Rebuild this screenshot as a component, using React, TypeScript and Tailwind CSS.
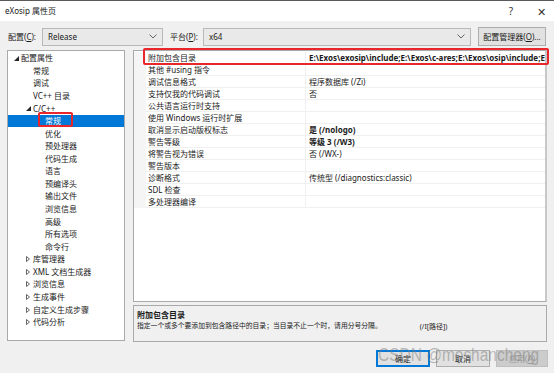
import React from "react";

type TreeItem = { label: string; level: number; arrow?: "open" | "closed"; selected?: boolean };

const tree: TreeItem[] = [
    { label: "配置属性", level: 0, arrow: "open" },
    { label: "常规", level: 1 },
    { label: "调试", level: 1 },
    { label: "VC++ 目录", level: 1 },
    { label: "C/C++", level: 1, arrow: "open" },
    { label: "常规", level: 2, selected: true },
    { label: "优化", level: 2 },
    { label: "预处理器", level: 2 },
    { label: "代码生成", level: 2 },
    { label: "语言", level: 2 },
    { label: "预编译头", level: 2 },
    { label: "输出文件", level: 2 },
    { label: "浏览信息", level: 2 },
    { label: "高级", level: 2 },
    { label: "所有选项", level: 2 },
    { label: "命令行", level: 2 },
    { label: "库管理器", level: 1, arrow: "closed" },
    { label: "XML 文档生成器", level: 1, arrow: "closed" },
    { label: "浏览信息", level: 1, arrow: "closed" },
    { label: "生成事件", level: 1, arrow: "closed" },
    { label: "自定义生成步骤", level: 1, arrow: "closed" },
    { label: "代码分析", level: 1, arrow: "closed" },
];

const props: { name: string; value?: string; bold?: boolean }[] = [
    { name: "附加包含目录", value: "E:\\Exos\\exosip\\include;E:\\Exos\\c-ares;E:\\Exos\\osip\\include;E:\\", bold: true },
    { name: "其他 #using 指令" },
    { name: "调试信息格式", value: "程序数据库 (/Zi)" },
    { name: "支持仅我的代码调试", value: "否" },
    { name: "公共语言运行时支持" },
    { name: "使用 Windows 运行时扩展" },
    { name: "取消显示启动版权标志", value: "是 (/nologo)", bold: true },
    { name: "警告等级", value: "等级 3 (/W3)", bold: true },
    { name: "将警告视为错误", value: "否 (/WX-)" },
    { name: "警告版本" },
    { name: "诊断格式", value: "传统型 (/diagnostics:classic)" },
    { name: "SDL 检查" },
    { name: "多处理器编译" },
];

function Arrow({ kind }: { kind?: "open" | "closed" }) {
    if (!kind) return null;
    return (
        <span className="w-[10px] h-full flex items-center justify-center shrink-0">
            {kind === "open" ? (
                <svg width="5" height="5" viewBox="0 0 5 5"><polygon points="5,0 5,5 0,5" fill="#262626" /></svg>
            ) : (
                <svg width="4" height="6" viewBox="0 0 4 6"><polygon points="0.5,0.5 3.5,3 0.5,5.5" fill="none" stroke="#555" strokeWidth="0.9" /></svg>
            )}
        </span>
    );
}

function Chevron() {
    return (
        <svg width="8" height="5" viewBox="0 0 8 5" className="shrink-0">
            <polyline points="0.5,0.5 4,4 7.5,0.5" fill="none" stroke="#555" strokeWidth="0.9" />
        </svg>
    );
}

export default function App() {
    return (
        <div className="w-[554px] h-[373px] bg-[#f0f0f0] relative overflow-hidden text-[8px] leading-none text-[#1a1a1a] [font-family:'Noto_Sans','Noto_Sans_CJK_SC',sans-serif]">
            {/* title bar */}
            <div className="h-[21px] bg-white border-t-[1px] border-[#5a5a5a] flex items-center pl-[5px] pr-[8px]">
                <span>eXosip 属性页</span>
                <span className="ml-auto text-[10px] text-[#333]">?</span>
                <span className="ml-[24px] text-[11px] text-[#333]">✕</span>
            </div>

            {/* configuration row */}
            <div className="flex items-center h-[19px] mt-[6px] pl-[8px] pr-[8px]">
                <span className="w-[34px]">配置(<u>C</u>):</span>
                <div className="w-[121px] h-[18px] bg-[#e9e9e9] border-[1px] border-[#b9b9b9] flex items-center px-[5px]">
                    <span>Release</span>
                    <span className="ml-auto"><Chevron /></span>
                </div>
                <span className="ml-[7px] w-[33px]">平台(<u>P</u>):</span>
                <div className="w-[268px] h-[18px] bg-[#e9e9e9] border-[1px] border-[#b9b9b9] flex items-center px-[5px]">
                    <span>x64</span>
                    <span className="ml-auto"><Chevron /></span>
                </div>
                <div className="ml-[7px] w-[68px] h-[19px] bg-[#e1e1e1] border-[1px] border-[#adadad] flex items-center justify-center">
                    配置管理器(<u>O</u>)...
                </div>
            </div>

            {/* main */}
            <div className="flex mt-[4px] pl-[7px] gap-[8px]">
                <div className="w-[118px] h-[291px] bg-white border-[1px] border-[#a9a9a9] pt-[1px]">
                    {tree.map((t, i) => (
                        <div
                            key={i}
                            className={
                                "h-[12.57px] flex items-center " +
                                (t.selected ? "bg-[#0078d7] text-white " : "") +
                                (t.level === 0 ? "pl-[3px]" : t.level === 1 ? (t.arrow ? "pl-[15px]" : "pl-[25px]") : "pl-[37px]")
                            }
                        >
                            <Arrow kind={t.arrow} />
                            <span>{t.label}</span>
                        </div>
                    ))}
                </div>

                <div className="w-[414px] flex flex-col gap-[3px]">
                    <div className="h-[252px] bg-white border-[1px] border-[#a9a9a9] border-r-[2px] border-r-[#c8c8c8] pt-[1px]">
                        {props.map((p, i) => (
                            <div key={i} className="h-[12px] flex">
                                <div className="w-[12px] bg-[#f5f5f5] shrink-0" />
                                <div className="w-[160px] shrink-0 border-b-[1px] border-r-[1px] border-[#f0f0f0] flex items-center pl-[2px] whitespace-nowrap">
                                    {p.name}
                                </div>
                                <div className={"flex-1 min-w-0 border-b-[1px] border-[#f0f0f0] flex items-center pl-[3px] whitespace-nowrap overflow-hidden " + (p.bold ? "font-bold" : "")}>
                                    {p.value}
                                </div>
                            </div>
                        ))}
                    </div>
                    <div className="h-[37px] border-[1px] border-[#a9a9a9] pt-[3px] pl-[3px]">
                        <div className="font-bold h-[12px] flex items-center">附加包含目录</div>
                        <div className="h-[11px] flex items-center text-[6.8px]">
                            <span>指定一个或多个要添加到包含路径中的目录；当目录不止一个时，请用分号分隔。</span>
                            <span className="ml-[38px] text-[7px]">(/I[路径])</span>
                        </div>
                    </div>
                </div>
            </div>

            {/* buttons */}
            <div className="flex justify-end gap-[6px] mt-[8px] pr-[6px]">
                <div className="w-[54px] h-[17px] bg-[#e1e1e1] border-[2px] border-[#0078d7] flex items-center justify-center">确定</div>
                <div className="w-[54px] h-[17px] bg-[#e1e1e1] border-[1px] border-[#adadad] flex items-center justify-center">取消</div>
                <div className="w-[52px] h-[17px] bg-[#cccccc] border-[1px] border-[#bfbfbf] text-[#9a9a9a] flex items-center justify-center">应用(<u>A</u>)</div>
            </div>

            {/* annotations */}
            <div className="absolute left-[38px] top-[112px] w-[35px] h-[15px] border-[2px] border-[#e8262b] rounded-[2px]" />
            <div className="absolute left-[143px] top-[48px] w-[406px] h-[17px] border-[2px] border-[#e8262b] rounded-[2px]" />
            <div className="absolute left-[378px] top-[346px] w-[200px] origin-left scale-x-[0.86] text-[18px] leading-none text-[rgba(125,125,125,0.5)] [font-family:'Liberation_Sans',sans-serif]">
                CSDN @moshancheng
            </div>
        </div>
    );
}
